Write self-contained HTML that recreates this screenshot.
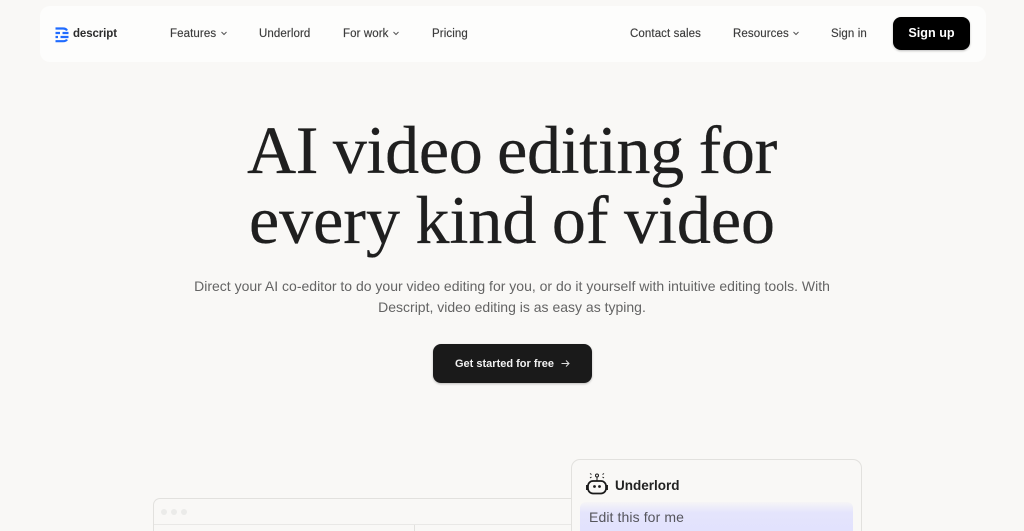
<!DOCTYPE html>
<html lang="en"><head><meta charset="utf-8"><title>Descript</title>
<style>
*{box-sizing:border-box}
html,body{margin:0;padding:0;width:1024px;height:531px;overflow:hidden;background:#f9f8f6}
#r{position:absolute;left:0;top:0;width:1024px;height:531px;overflow:hidden;background:#f9f8f6;font-family:"Liberation Sans",sans-serif;color:#3a3a3a}
.a{position:absolute;white-space:nowrap}
.nav{left:40px;top:6px;width:946px;height:56px;background:#fdfdfc;border-radius:10px}
.l{font-size:11.5px;top:27px;line-height:14px;color:#3c3c3c;letter-spacing:.1px;-webkit-text-stroke:.15px #3c3c3c}
.h{font-family:"Liberation Serif",serif;font-size:68px;line-height:70px;color:#1f1f1f;left:0;width:1024px;text-align:center;-webkit-text-stroke:.3px #1f1f1f}
.p{font-size:14px;line-height:21px;color:#646464;left:0;width:1024px;text-align:center;letter-spacing:0}
svg{position:absolute;overflow:visible}
</style></head><body><div id="r">
<div class="a nav"></div>
<svg style="left:55px;top:27px" width="14" height="16" viewBox="0 0 14 16"><g fill="none" stroke="#1f6bff" stroke-width="2.2"><path d="M.5 1.5H8Q11 1.5 12 3.5"/><path d="M.5 6H5M7.5 6H13.5"/><path d="M.5 10H3M5.5 10H13.5"/><path d="M.5 14.200H8Q11 14.200 12 12.500"/></g></svg>
<div class="a" style="left:73px;top:27px;font-size:11.5px;line-height:14px;font-weight:bold;color:#2c2c2c;letter-spacing:-.1px">descript</div>
<div class="a l" style="left:170px">Features</div>
<svg style="left:221px;top:31px" width="6" height="5" viewBox="0 0 6 5"><path d="M.5 1L3 3.500 5.500 1" fill="none" stroke="#555" stroke-width="1"/></svg>
<div class="a l" style="left:259px">Underlord</div>
<div class="a l" style="left:343px">For work</div>
<svg style="left:393px;top:31px" width="6" height="5" viewBox="0 0 6 5"><path d="M.5 1L3 3.500 5.500 1" fill="none" stroke="#555" stroke-width="1"/></svg>
<div class="a l" style="left:432px">Pricing</div>
<div class="a l" style="left:630px">Contact sales</div>
<div class="a l" style="left:733px">Resources</div>
<svg style="left:793px;top:31px" width="6" height="5" viewBox="0 0 6 5"><path d="M.5 1L3 3.500 5.500 1" fill="none" stroke="#555" stroke-width="1"/></svg>
<div class="a l" style="left:831px">Sign in</div>
<div class="a" style="left:893px;top:17px;width:77px;height:33px;background:#000;border-radius:8px;box-shadow:0 1px 2px rgba(0,0,0,.25);color:#fff;font-size:12.6px;font-weight:bold;line-height:33px;text-align:center">Sign up</div>
<div class="a h" style="top:115px;letter-spacing:-.3px;word-spacing:-2px">AI video editing for</div>
<div class="a h" style="top:185px;letter-spacing:0;word-spacing:-1.500px">every kind of video</div>
<div class="a p" style="top:276px">Direct your AI co-editor to do your video editing for you, or do it yourself with intuitive editing tools. With</div>
<div class="a p" style="top:297px">Descript, video editing is as easy as typing.</div>
<div class="a" style="left:433px;top:344px;width:159px;height:39px;background:#1a1a1a;border-radius:8px;box-shadow:0 1px 2px rgba(0,0,0,.25)"></div>
<div class="a" style="left:455px;top:357px;font-size:11px;line-height:14px;font-weight:bold;color:#f2f2f2">Get started for free</div>
<svg style="left:561px;top:359px" width="9" height="9" viewBox="0 0 9 9"><path d="M.5 4.500H8M5 1.500L8 4.500 5 7.500" fill="none" stroke="#ddd" stroke-width="1"/></svg>
<div class="a" style="left:153px;top:498px;width:425px;height:33px;border:1.500px solid #e2e1de;border-bottom:0;border-right:0;border-radius:7px 0 0 0;background:#f9f8f6"></div>
<div class="a" style="left:154px;top:524px;width:420px;height:1px;background:#e9e8e6"></div>
<div class="a" style="left:414px;top:525px;width:1px;height:6px;background:#e2e1de"></div>
<div class="a" style="left:161px;top:509px;width:6px;height:6px;border-radius:50%;background:#ebebe9"></div>
<div class="a" style="left:171px;top:509px;width:6px;height:6px;border-radius:50%;background:#ebebe9"></div>
<div class="a" style="left:181px;top:509px;width:6px;height:6px;border-radius:50%;background:#ebebe9"></div>
<div class="a" style="left:571px;top:459px;width:291px;height:72px;border:1.500px solid #e2e1de;border-bottom:0;border-radius:9px 9px 0 0;background:#f9f8f6"></div>
<div class="a" style="left:580px;top:502px;width:273px;height:29px;border-radius:6px 6px 0 0;background:linear-gradient(#f6f5f6 0,#e4e4fc 11px,#e2e2fd 100%)"></div>
<svg style="left:586px;top:472px" width="23" height="23" viewBox="0 0 23 23"><g fill="none" stroke="#1a1a1a"><rect x="2" y="9" width="18" height="12.500" rx="5" stroke-width="1.700"/><path d="M.8 13v5M21.200 13v5" stroke-width="1.500"/><circle cx="11" cy="3.500" r="1.500" stroke-width="1"/><path d="M11 5v4" stroke-width="1"/><path d="M4 1.500l1.500 1M5.500 5l-1.500 1M18 1.500l-1.500 1M16.500 5l1.500 1" stroke-width="1"/></g><circle cx="8.500" cy="14.500" r="1.400" fill="#1a1a1a"/><circle cx="13.500" cy="14.500" r="1.400" fill="#1a1a1a"/></svg>
<div class="a" style="left:615px;top:478px;font-size:13.500px;line-height:16px;font-weight:bold;color:#222">Underlord</div>
<div class="a" style="left:589px;top:509px;font-size:14px;line-height:17px;color:#55555c;letter-spacing:.1px">Edit this for me</div>
</div></body></html>
